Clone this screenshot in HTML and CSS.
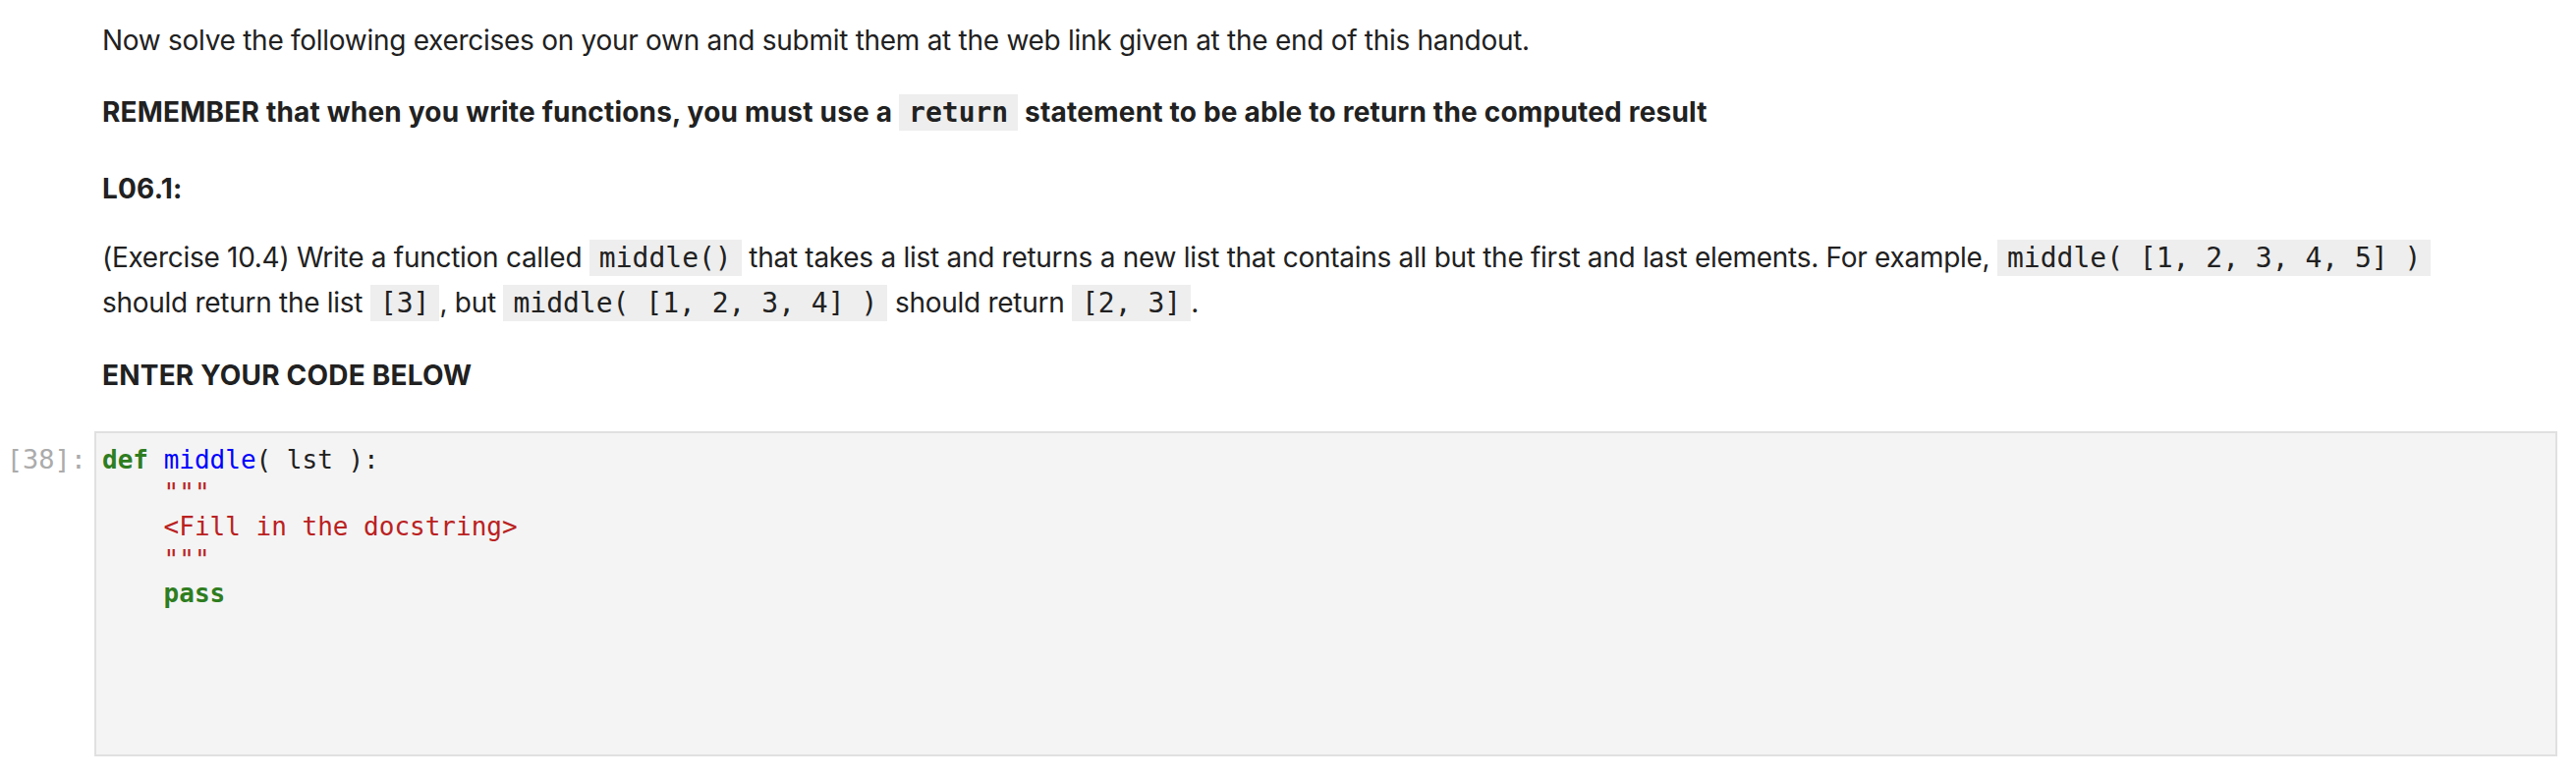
FILE: index.html
```html
<!DOCTYPE html>
<html>
<head>
<meta charset="utf-8">
<link rel="stylesheet" href="styles.css">
</head>
<body>
<div class="notebook">
  <div class="md">
    <p class="p1">Now solve the following exercises on your own and submit them at the web link given at the end of this handout.</p>
    <p class="p2"><strong>REMEMBER that when you write functions, you must use a <code>return</code> statement to be able to return the computed result</strong></p>
    <p class="p3"><strong>L06.1:</strong></p>
    <p class="p4">(Exercise 10.4) Write a function called <code>middle()</code> that takes a list and returns a new list that contains all but the first and last elements. For example, <code>middle( [1, 2, 3, 4, 5] )</code> should return the list <code>[3]</code>, but <code>middle( [1, 2, 3, 4] )</code> should return <code>[2, 3]</code>.</p>
    <p class="p5"><strong>ENTER YOUR CODE BELOW</strong></p>
  </div>
  <div class="code-row">
    <div class="prompt">[38]:</div>
    <div class="editor">
      <div class="line"><span class="kw">def</span> <span class="def">middle</span><span>( lst ):</span></div>
      <div class="line indent"><span class="str">"""</span></div>
      <div class="line indent"><span class="str">&lt;Fill in the docstring&gt;</span></div>
      <div class="line indent"><span class="str">"""</span></div>
      <div class="line indent"><span class="kw">pass</span></div>
    </div>
  </div>
</div>
</body>
</html>
```
FILE: styles.css
```css
html, body {
  margin: 0;
  padding: 0;
  background: #ffffff;
}
.notebook {
  width: 2603px;
  padding-top: 19px;
}
.md {
  padding-left: 104px;
  width: 2456px;
  font-family: Inter, "Noto Sans", "Liberation Sans", sans-serif;
  font-size: 28px;
  line-height: 44.8px;
  letter-spacing: -0.28px;
  color: #212121;
}
.md p {
  margin: 0;
}
.p1 { margin-bottom: 28px !important; }
.p2 { margin-bottom: 32px !important; }
.p3 { margin-bottom: 26px !important; }
.p4 { margin-bottom: 28px !important; }
.md strong {
  font-weight: 700;
  letter-spacing: 0.2px;
}
.md code {
  font-family: "DejaVu Sans Mono", monospace;
  font-size: 28px;
  letter-spacing: 0;
  background: #eeeeee;
  padding: 2px 10px;
  color: #212121;
}
.code-row {
  display: flex;
  margin-top: 34px;
}
.prompt {
  width: 96px;
  flex: none;
  box-sizing: border-box;
  padding-right: 8px;
  padding-top: 12px;
  text-align: right;
  font-family: "DejaVu Sans Mono", monospace;
  font-size: 27px;
  line-height: 34px;
  color: #ababab;
}
.editor {
  flex: 1;
  height: 331px;
  box-sizing: border-box;
  border: 2px solid #e0e0e0;
  background: #f4f4f4;
  padding: 10px 6px;
  font-family: "DejaVu Sans Mono", monospace;
  font-size: 26px;
  line-height: 34px;
  color: #212121;
}
.line {
  white-space: pre;
}
.indent {
  padding-left: 62.6px;
}
.kw {
  color: #2e7d1f;
  font-weight: 700;
}
.def {
  color: #0000ff;
}
.str {
  color: #ba2121;
}
```
